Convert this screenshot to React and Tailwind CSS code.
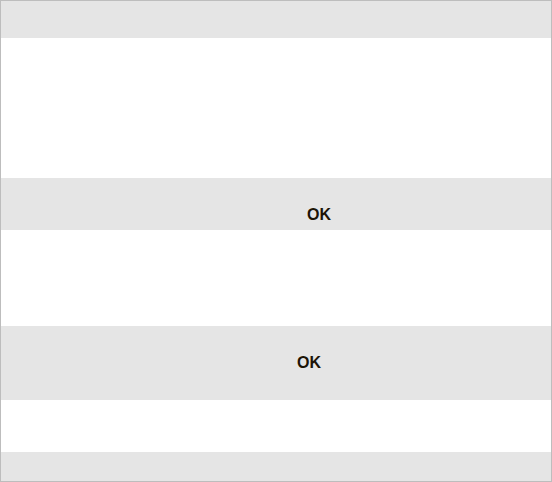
import React from 'react';

function Band({ className, children }) {
  return <div className={`bg-[#e5e5e5] ${className}`}>{children}</div>;
}

function OkLabel({ className }) {
  return (
    <div className={`text-[16px] leading-[18px] font-bold text-[#1c1406] ${className}`}>OK</div>
  );
}

export default function App() {
  return (
    <div
      className="w-[552px] h-[482px] border border-[#bdbdbd] flex flex-col bg-white overflow-hidden"
      style={{ fontFamily: '"Liberation Sans", Arial, sans-serif' }}
    >
      <Band className="h-[37px] shrink-0" />
      <div className="h-[140px] shrink-0" />
      <Band className="h-[52px] shrink-0 pt-[28px] pl-[306px]">
        <OkLabel />
      </Band>
      <div className="h-[96px] shrink-0" />
      <Band className="h-[74px] shrink-0 pt-[28px] pl-[296px]">
        <OkLabel />
      </Band>
      <div className="h-[52px] shrink-0" />
      <Band className="grow" />
    </div>
  );
}
